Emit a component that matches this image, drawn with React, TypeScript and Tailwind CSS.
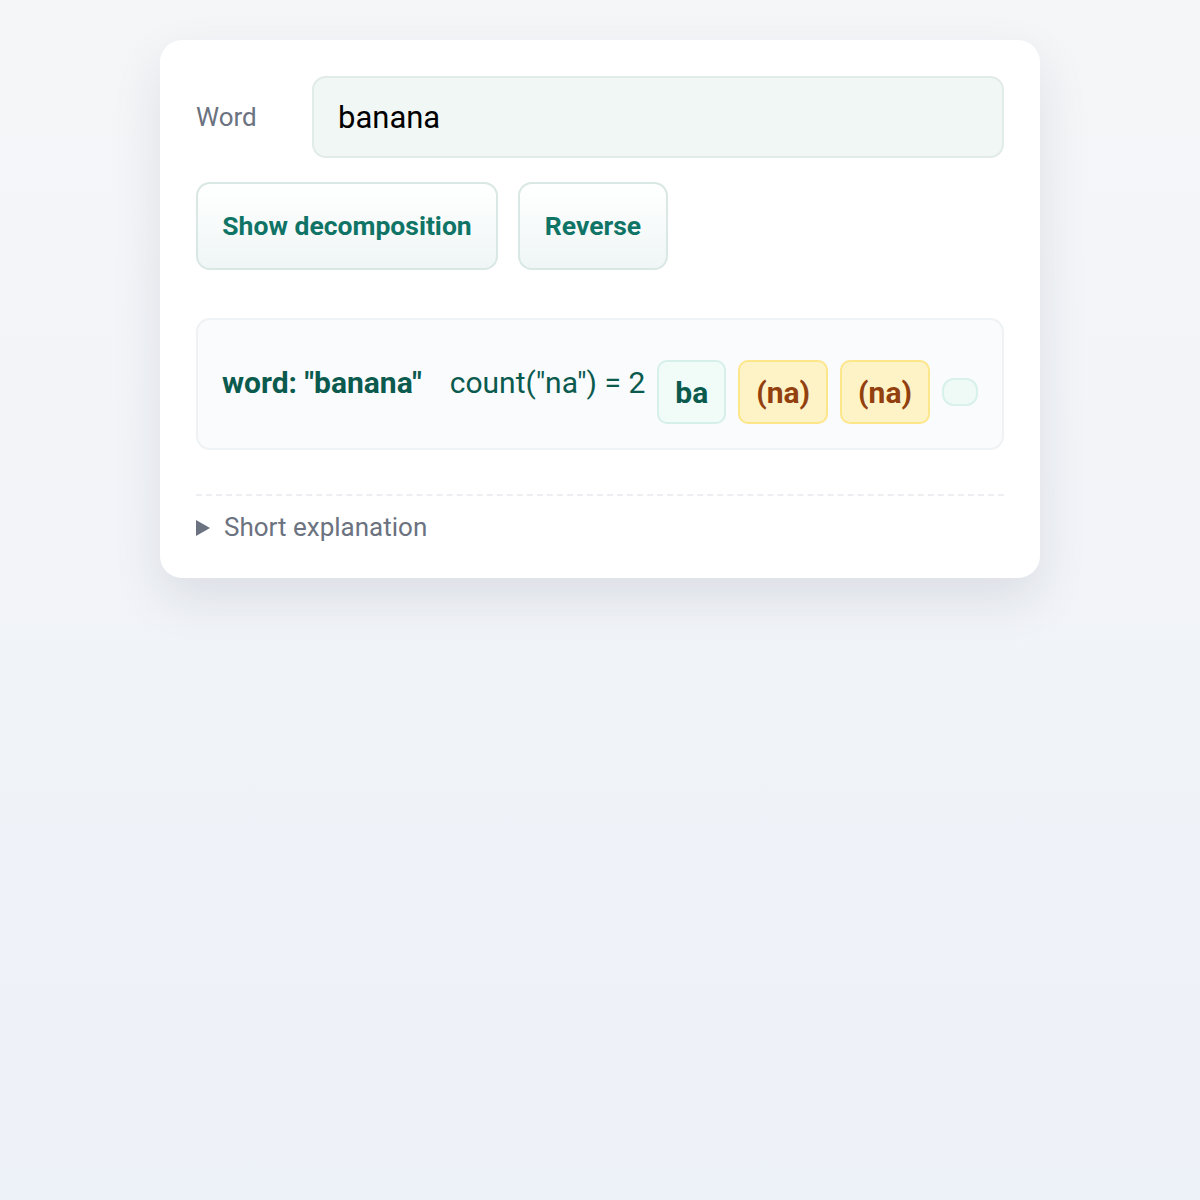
import React, { useState } from "react";

function Chip({ children, tone }: { children?: React.ReactNode; tone: "base" | "match" | "empty" }) {
  if (tone === "empty") {
    return <span className="mt-[16px] inline-block shrink-0 w-[36px] h-[28px] rounded-[12px] bg-[#effaf7] border-2 border-[#d9f1eb]" />;
  }
  const cls =
    tone === "base"
      ? "bg-[#f1fbf8] border-[#d6f0e9] text-[#0b5a4e]"
      : "bg-[#fef3c7] border-[#fde68a] text-[#92400e]";
  return (
    <span
      className={`mt-[16px] inline-flex shrink-0 items-center justify-center whitespace-nowrap h-[64px] px-[16px] rounded-[10px] border-2 text-[30px] font-bold ${cls}`}
    >
      {children}
    </span>
  );
}

export default function App() {
  const [word, setWord] = useState("banana");
  const font = { fontFamily: "Roboto, 'Noto Sans', sans-serif" };

  return (
    <div
      className="min-h-[1200px] w-full bg-gradient-to-b from-[#f5f6f8] to-[#edf1f8] pt-[40px]"
      style={font}
    >
      <div className="mx-auto w-[880px] rounded-[22px] bg-white px-[36px] pt-[36px] pb-[31px] shadow-[0_20px_50px_rgba(30,41,59,0.10)]">
        <div className="grid grid-cols-[116px_1fr] items-center">
          <label className="text-[26px] text-[#6b7280]">Word</label>
          <input
            value={word}
            onChange={(e) => setWord(e.target.value)}
            className="h-[82px] rounded-[14px] border-2 border-[#e1ebe8] bg-[#f1f7f5] px-[24px] text-[31px] text-black outline-none"
          />
        </div>

        <div className="mt-[24px] flex gap-[20px]">
          <button className="h-[88px] w-[302px] rounded-[14px] border-2 border-[#d9e8e4] bg-gradient-to-b from-white to-[#eff6f5] text-[26.5px] font-bold text-[#0f7466]">
            Show decomposition
          </button>
          <button className="h-[88px] w-[150px] rounded-[14px] border-2 border-[#d9e8e4] bg-gradient-to-b from-white to-[#eff6f5] text-[26.5px] font-bold text-[#0f7466]">
            Reverse
          </button>
        </div>

        <div className="mt-[48px] flex h-[132px] items-center gap-[12px] rounded-[14px] border-2 border-[#eef2f5] bg-[#f9fbfd] pl-[24px] pr-[12px]">
          <span className="mr-[16px] mb-[3px] shrink-0 whitespace-nowrap text-[30px] font-bold text-[#0b5a4e]">word: "banana"</span>
          <span className="mb-[3px] shrink-0 whitespace-nowrap text-[30px] text-[#0b5a4e]">count("na") = 2</span>
          <Chip tone="base">ba</Chip>
          <Chip tone="match">(na)</Chip>
          <Chip tone="match">(na)</Chip>
          <Chip tone="empty" />
        </div>

        <div className="mt-[44px] border-t-2 border-dashed border-[#eceef1] pt-[12px]">
          <div className="flex items-center gap-[14px] text-[26px] text-[#6b7280]">
            <svg width="14" height="16" viewBox="0 0 14 16" className="shrink-0">
              <path d="M0 0 L14 8 L0 16 Z" fill="#6b7280" />
            </svg>
            <span>Short explanation</span>
          </div>
        </div>
      </div>
    </div>
  );
}
